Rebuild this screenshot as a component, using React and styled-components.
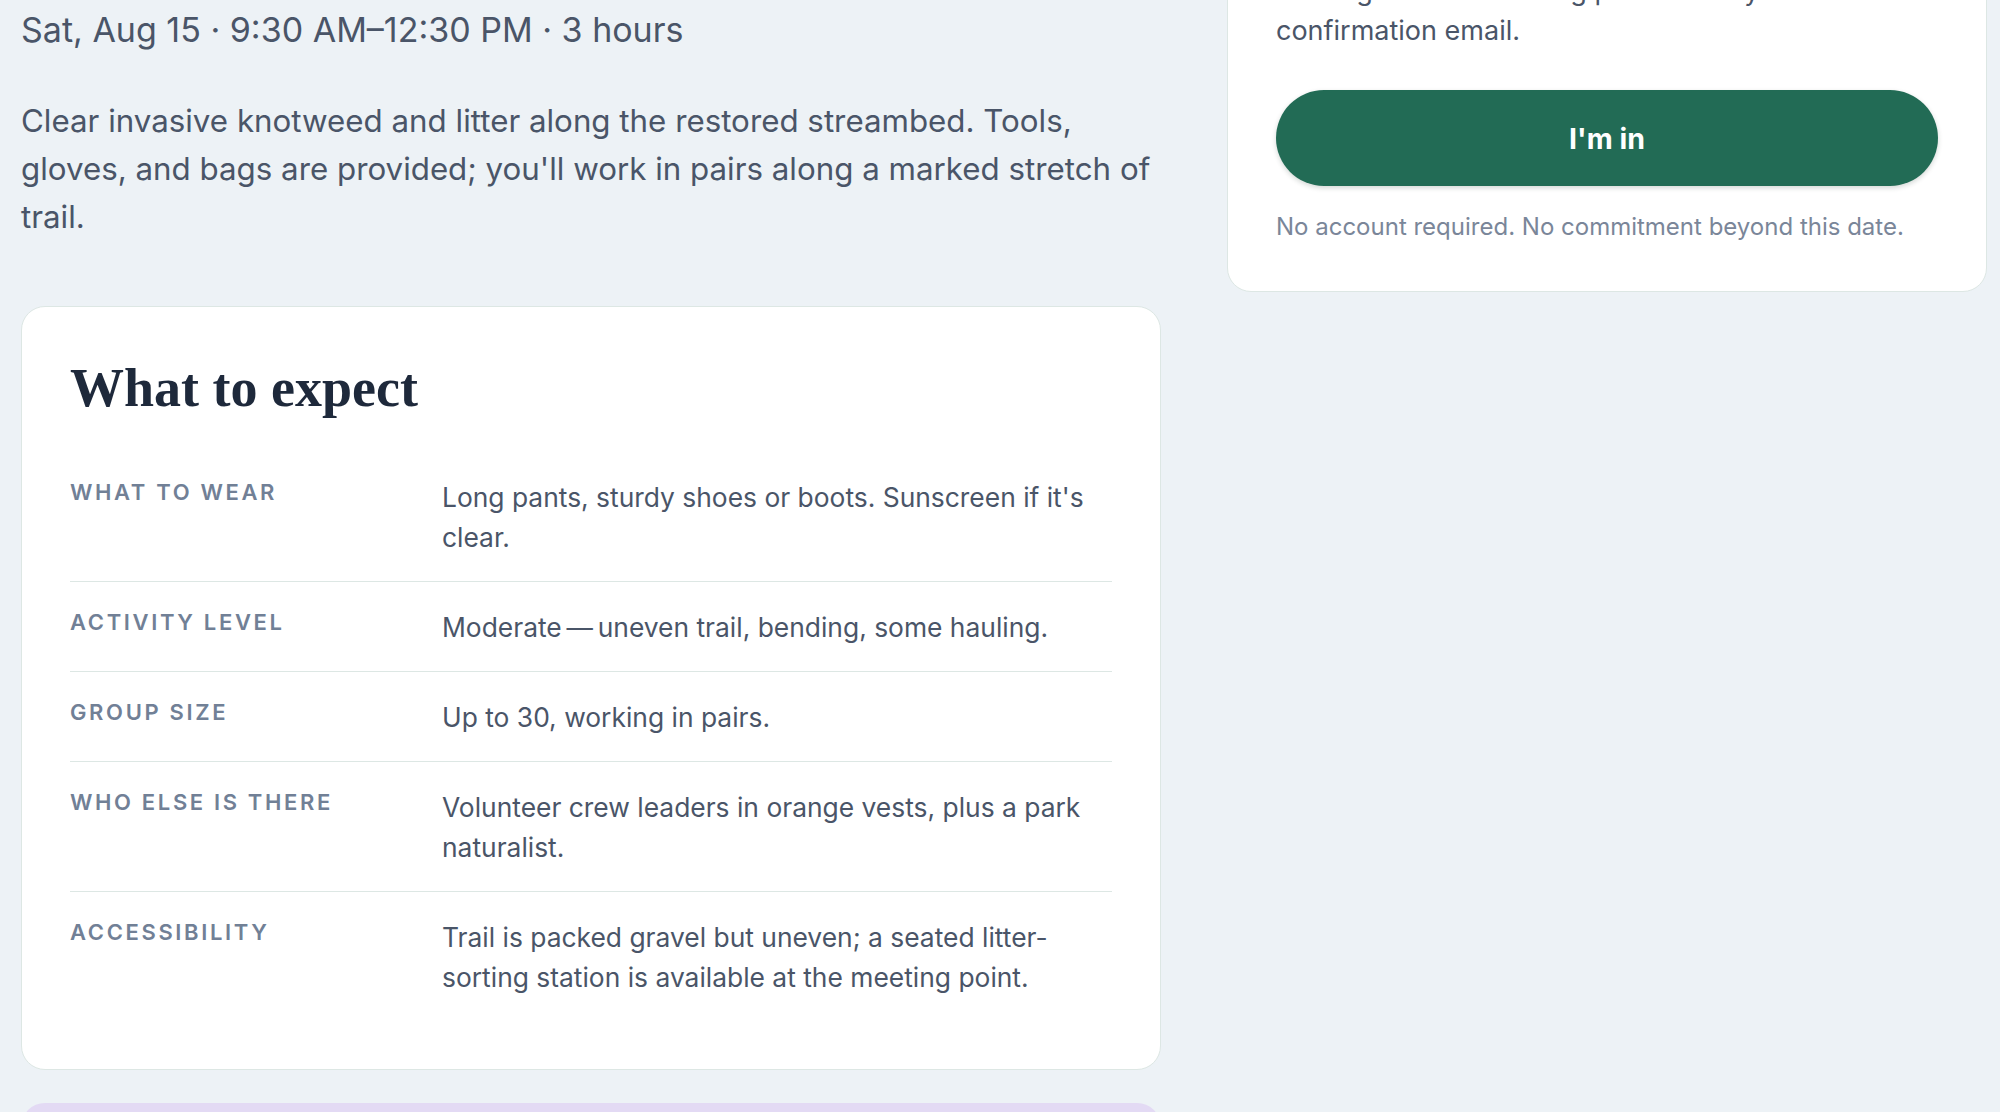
import React from 'react';
import styled, { createGlobalStyle } from 'styled-components';

const GlobalStyle = createGlobalStyle`
  html, body {
    margin: 0;
    padding: 0;
    background: #edf2f6;
  }
  body {
    font-family: Inter, "Noto Sans", sans-serif;
    -webkit-font-smoothing: antialiased;
  }
`;

const details = [
  { label: 'What to wear', value: "Long pants, sturdy shoes or boots. Sunscreen if it's clear." },
  { label: 'Activity level', value: 'Moderate\u2009\u2014\u2009uneven trail, bending, some hauling.' },
  { label: 'Group size', value: 'Up to 30, working in pairs.' },
  { label: 'Who else is there', value: 'Volunteer crew leaders in orange vests, plus a park naturalist.' },
  { label: 'Accessibility', value: 'Trail is packed gravel but uneven; a seated litter-sorting station is available at the meeting point.' },
];

function App() {
  return (
    <>
      <GlobalStyle />
      <Page>
        <Main>
          <DateLine>Sat, Aug 15 · 9:30 AM–12:30 PM · 3 hours</DateLine>
          <Summary>
            Clear invasive knotweed and litter along the restored streambed. Tools, gloves, and bags are
            provided; you'll work in pairs along a marked stretch of trail.
          </Summary>

          <Card>
            <CardTitle>What to expect</CardTitle>
            <DetailList>
              {details.map((d) => (
                <DetailRow key={d.label}>
                  <DetailLabel>{d.label}</DetailLabel>
                  <DetailValue>{d.value}</DetailValue>
                </DetailRow>
              ))}
            </DetailList>
          </Card>

          <NoteCard>
            <NoteTitle>Bring a friend</NoteTitle>
            <NoteText>Pairs who sign up together are kept together on the trail.</NoteText>
          </NoteCard>
        </Main>

        <Side>
          <SignupCard>
            <SignupTitle>Save your spot</SignupTitle>
            <SignupText>
              We'll hold gloves and a bag for you at check-in. Parking and the meeting point are in your
              <br />
              confirmation email.
            </SignupText>
            <JoinButton type="button">I'm in</JoinButton>
            <FinePrint>No account required. No commitment beyond this date.</FinePrint>
          </SignupCard>
        </Side>
      </Page>
    </>
  );
}

const Page = styled.div`
  display: grid;
  grid-template-columns: 1140px 760px;
  column-gap: 66px;
  align-items: start;
  padding: 0 13px 0 21px;
`;

const Main = styled.main`
  display: flex;
  flex-direction: column;
  min-width: 0;
`;

const DateLine = styled.p`
  margin: 6px 0 0;
  font-size: 34px;
  line-height: 48px;
  color: #4a5568;
`;

const Summary = styled.p`
  margin: 43px -14px 0 0;
  font-size: 31.3px;
  line-height: 48px;
  color: #4a5568;
`;

const Card = styled.section`
  margin-top: 65px;
  background: #ffffff;
  border: 1px solid #dde7e4;
  border-radius: 24px;
  padding: 48px;
`;

const CardTitle = styled.h2`
  margin: 0 0 31px;
  font-family: "Liberation Serif", "DejaVu Serif", serif;
  font-weight: 700;
  font-size: 54px;
  line-height: 66px;
  color: #1e293b;
`;

const DetailList = styled.dl`
  margin: 0;
`;

const DetailRow = styled.div`
  display: grid;
  grid-template-columns: 340px 1fr;
  column-gap: 32px;
  align-items: start;
  padding: 24.5px 0;
  border-bottom: 1px solid #dde7e4;

  &:last-child {
    border-bottom: none;
  }
`;

const DetailLabel = styled.dt`
  margin: 0;
  font-size: 22px;
  line-height: 30px;
  font-weight: 600;
  letter-spacing: 0.12em;
  text-transform: uppercase;
  color: #718096;
`;

const DetailValue = styled.dd`
  margin: 0;
  font-size: 26.4px;
  line-height: 40px;
  color: #4a5568;
`;

const NoteCard = styled.section`
  margin-top: 33px;
  background: #e3daf4;
  border-radius: 24px;
  padding: 56px 48px 48px;
`;

const NoteTitle = styled.h3`
  margin: 0 0 12px;
  font-family: "Liberation Serif", serif;
  font-size: 36px;
  color: #1e293b;
`;

const NoteText = styled.p`
  margin: 0;
  font-size: 26px;
  line-height: 40px;
  color: #4a5568;
`;

const Side = styled.aside`
  min-width: 0;
`;

const SignupCard = styled.section`
  margin-top: -177.5px;
  background: #ffffff;
  border: 1px solid #dde7e4;
  border-radius: 24px;
  padding: 48px;
  display: flex;
  flex-direction: column;
`;

const SignupTitle = styled.h3`
  margin: 0 0 16px;
  font-family: "Liberation Serif", serif;
  font-size: 36px;
  line-height: 1.2;
  color: #1e293b;
`;

const SignupText = styled.p`
  margin: 0 0 39.5px;
  font-size: 27px;
  line-height: 40px;
  color: #4a5568;
`;

const JoinButton = styled.button`
  height: 96px;
  width: 100%;
  border: none;
  border-radius: 999px;
  background: #226b55;
  color: #ffffff;
  font-family: Inter, "Noto Sans", sans-serif;
  font-size: 28.5px;
  font-weight: 700;
  box-shadow: 0 2px 5px rgba(15, 40, 30, 0.18);
  cursor: pointer;
`;

const FinePrint = styled.p`
  margin: 24px 0 0;
  font-size: 24px;
  line-height: 33px;
  color: #7a8699;
`;

export default App;
